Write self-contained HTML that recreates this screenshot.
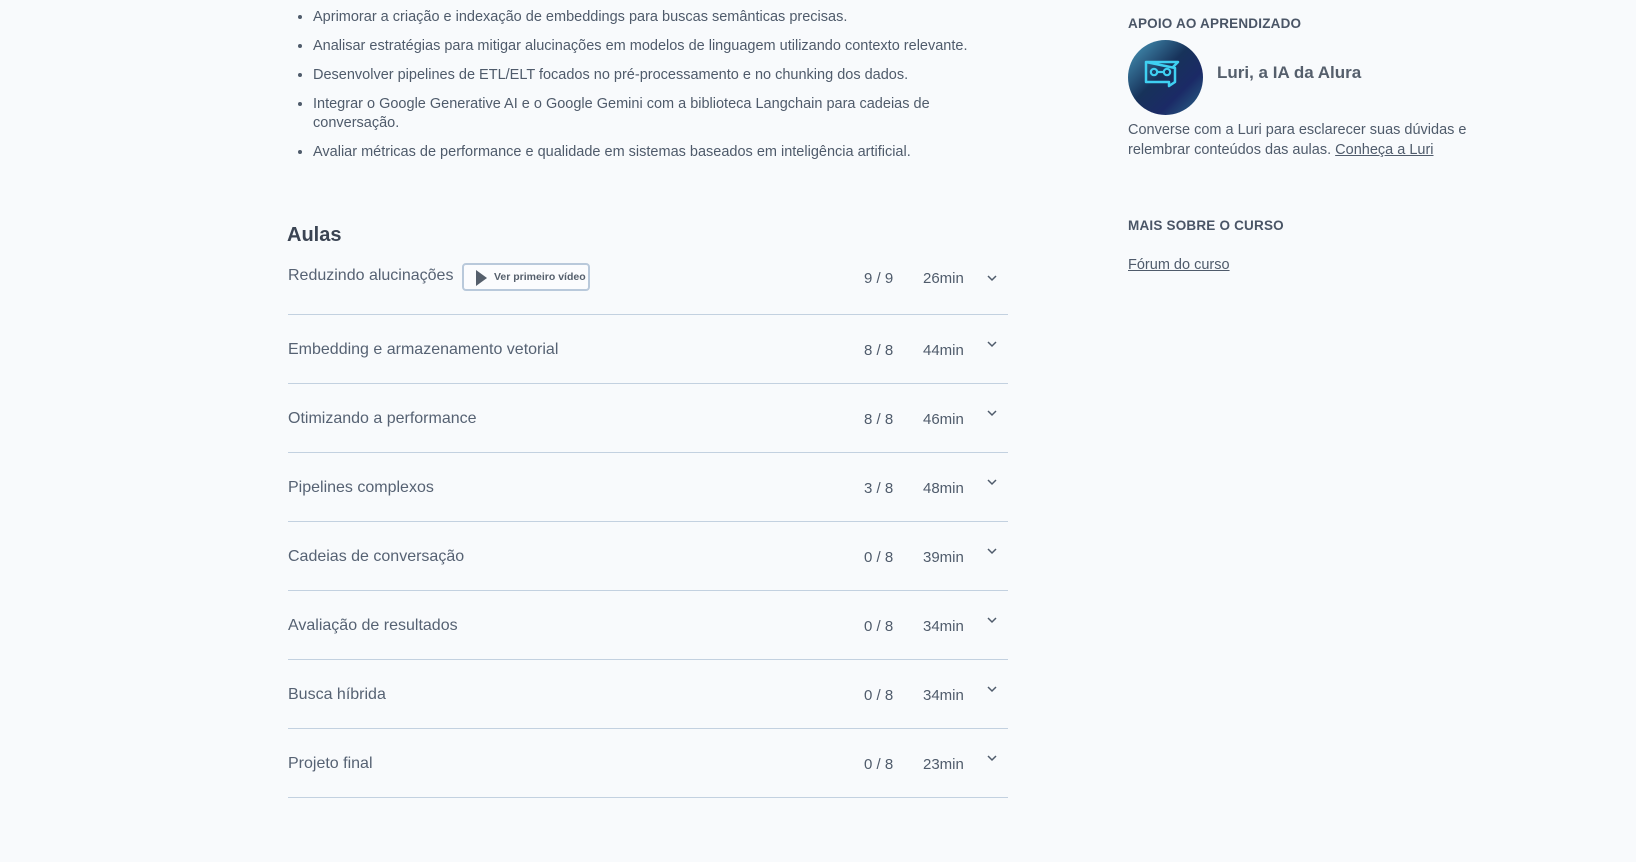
<!DOCTYPE html>
<html><head><meta charset="utf-8"><style>
body{margin:0;background:#f8fafc;font-family:"Liberation Sans",sans-serif;color:#4f5b6b;width:1636px;height:862px;overflow:hidden;position:relative}
.a{position:absolute;white-space:nowrap}
ul{position:absolute;left:288px;top:8px;margin:0;padding:0 0 0 25px;width:690px;font-size:14.5px;line-height:19px}
li{margin-bottom:10px}
li::marker{color:#4f5b6b}
.h{font-weight:bold;font-size:13.5px;color:#4a5566;letter-spacing:.2px}
.row{position:absolute;left:288px;width:720px;height:69px;border-bottom:1px solid #c3d1e0}
.t{position:absolute;left:0;font-size:16px;color:#566273}
.c{position:absolute;left:576px;font-size:15px}
.m{position:absolute;left:635px;font-size:15px}
.v{position:absolute;left:699px;width:10px;height:10px}
</style></head><body>
<ul>
<li>Aprimorar a criação e indexação de embeddings para buscas semânticas precisas.</li>
<li>Analisar estratégias para mitigar alucinações em modelos de linguagem utilizando contexto relevante.</li>
<li>Desenvolver pipelines de ETL/ELT focados no pré-processamento e no chunking dos dados.</li>
<li>Integrar o Google Generative AI e o Google Gemini com a biblioteca Langchain para cadeias de conversação.</li>
<li>Avaliar métricas de performance e qualidade em sistemas baseados em inteligência artificial.</li>
</ul>
<div class="a" style="left:287px;top:224px;font-size:20px;font-weight:bold;color:#3b4453">Aulas</div>

<div class="row" style="top:245px">
<div class="t" style="top:22px">Reduzindo alucinações</div>
<div class="a" style="left:174px;top:18px;width:128px;height:28px;border:2px solid #b9c9db;border-radius:4px;box-sizing:border-box;background:#fbfcfe">
<svg style="position:absolute;left:11px;top:5px" width="13" height="16"><path d="M1 0L12 8L1 16Z" fill="#555f6c"/></svg>
<span style="position:absolute;left:30px;top:6px;font-size:10.5px;font-weight:bold;color:#555f6c">Ver primeiro vídeo</span></div>
<div class="c" style="top:25px">9 / 9</div><div class="m" style="top:25px">26min</div>
<svg class="v" style="top:28px" viewBox="0 0 10 10"><path d="M1 3L5 7L9 3" stroke="#4f5b6b" stroke-width="1.5" fill="none"/></svg>
</div>

<div class="row" style="top:314px"><div class="t" style="top:27px">Embedding e armazenamento vetorial</div><div class="c" style="top:28px">8 / 8</div><div class="m" style="top:28px">44min</div><svg class="v" style="top:25px" viewBox="0 0 10 10"><path d="M1 3L5 7L9 3" stroke="#4f5b6b" stroke-width="1.5" fill="none"/></svg></div>
<div class="row" style="top:383px"><div class="t" style="top:27px">Otimizando a performance</div><div class="c" style="top:28px">8 / 8</div><div class="m" style="top:28px">46min</div><svg class="v" style="top:25px" viewBox="0 0 10 10"><path d="M1 3L5 7L9 3" stroke="#4f5b6b" stroke-width="1.5" fill="none"/></svg></div>
<div class="row" style="top:452px"><div class="t" style="top:27px">Pipelines complexos</div><div class="c" style="top:28px">3 / 8</div><div class="m" style="top:28px">48min</div><svg class="v" style="top:25px" viewBox="0 0 10 10"><path d="M1 3L5 7L9 3" stroke="#4f5b6b" stroke-width="1.5" fill="none"/></svg></div>
<div class="row" style="top:521px"><div class="t" style="top:27px">Cadeias de conversação</div><div class="c" style="top:28px">0 / 8</div><div class="m" style="top:28px">39min</div><svg class="v" style="top:25px" viewBox="0 0 10 10"><path d="M1 3L5 7L9 3" stroke="#4f5b6b" stroke-width="1.5" fill="none"/></svg></div>
<div class="row" style="top:590px"><div class="t" style="top:27px">Avaliação de resultados</div><div class="c" style="top:28px">0 / 8</div><div class="m" style="top:28px">34min</div><svg class="v" style="top:25px" viewBox="0 0 10 10"><path d="M1 3L5 7L9 3" stroke="#4f5b6b" stroke-width="1.5" fill="none"/></svg></div>
<div class="row" style="top:659px"><div class="t" style="top:27px">Busca híbrida</div><div class="c" style="top:28px">0 / 8</div><div class="m" style="top:28px">34min</div><svg class="v" style="top:25px" viewBox="0 0 10 10"><path d="M1 3L5 7L9 3" stroke="#4f5b6b" stroke-width="1.5" fill="none"/></svg></div>
<div class="row" style="top:728px"><div class="t" style="top:27px">Projeto final</div><div class="c" style="top:28px">0 / 8</div><div class="m" style="top:28px">23min</div><svg class="v" style="top:25px" viewBox="0 0 10 10"><path d="M1 3L5 7L9 3" stroke="#4f5b6b" stroke-width="1.5" fill="none"/></svg></div>

<div class="a h" style="left:1128px;top:16px">APOIO AO APRENDIZADO</div>
<svg class="a" style="left:1128px;top:40px" width="75" height="75" viewBox="0 0 75 75">
<defs><linearGradient id="g" x1="0" y1="0" x2="1" y2="1"><stop offset="0" stop-color="#4a9ec0"/><stop offset=".45" stop-color="#17325a"/><stop offset=".7" stop-color="#1b2a66"/><stop offset="1" stop-color="#2a6a8a"/></linearGradient></defs>
<circle cx="37.5" cy="37.5" r="37.5" fill="url(#g)"/>
<path d="M18 22H50L44 28M47 28V42L41 46V42H18V22Z" stroke="#3fd0f2" stroke-width="2.5" fill="none" stroke-linejoin="round"/>
<circle cx="26" cy="32" r="3.2" stroke="#3fd0f2" stroke-width="2.2" fill="none"/><circle cx="39" cy="32" r="3.2" stroke="#3fd0f2" stroke-width="2.2" fill="none"/><path d="M29 32H36" stroke="#3fd0f2" stroke-width="2.2"/>
</svg>
<div class="a" style="left:1217px;top:63px;font-size:17px;font-weight:bold;color:#555f6c">Luri, a IA da Alura</div>
<div class="a" style="left:1128px;top:121px;font-size:14.5px;line-height:19.5px">Converse com a Luri para esclarecer suas dúvidas e<br>relembrar conteúdos das aulas. <u>Conheça a Luri</u></div>
<div class="a h" style="left:1128px;top:218px">MAIS SOBRE O CURSO</div>
<div class="a" style="left:1128px;top:257px;font-size:14.5px"><u>Fórum do curso</u></div>
</body></html>
